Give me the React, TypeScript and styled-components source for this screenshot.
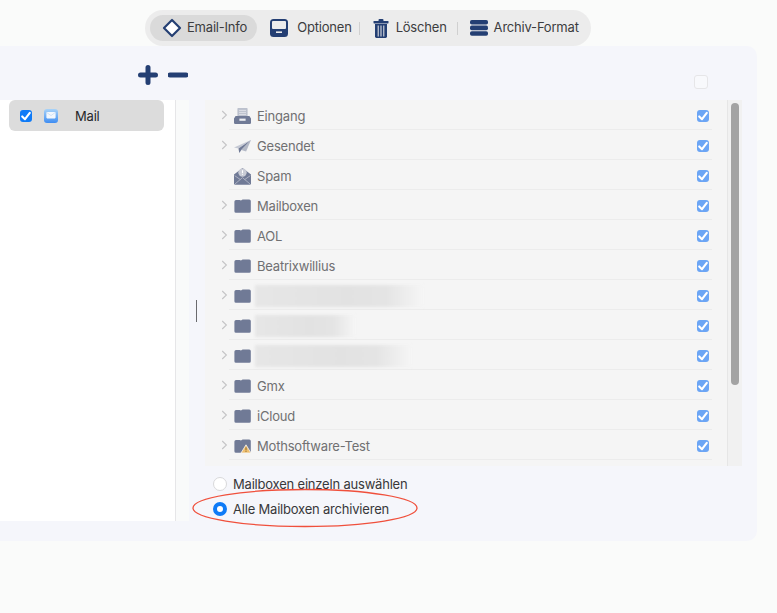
import React from 'react';
import styled, { createGlobalStyle } from 'styled-components';

const GlobalStyle = createGlobalStyle`
  html, body {
    margin: 0;
    padding: 0;
    background: #fafbfa;
    font-family: Inter, "Liberation Sans", sans-serif;
    overflow: hidden;
  }
`;

const NAVY = '#243f73';
const FOLDER = '#707a96';

const DiamondIcon = () => (
  <svg width="20" height="20" viewBox="0 0 20 20">
    <path d="M10 2 18 10 10 18 2 10Z" fill="#fff" stroke={NAVY} strokeWidth="2.2" strokeLinejoin="round" />
  </svg>
);

const OptionsIcon = () => (
  <svg width="18" height="18" viewBox="0 0 18 18">
    <rect width="18" height="18" rx="3.5" fill={NAVY} />
    <rect x="2" y="2" width="14" height="8" rx="1" fill="#ececec" />
    <rect x="6" y="12.4" width="6" height="1.6" fill="#ececec" />
  </svg>
);

const TrashIcon = () => (
  <svg width="16" height="19" viewBox="0 0 16 19">
    <rect x="5.5" y="0" width="5" height="2.5" rx="1" fill={NAVY} />
    <rect x="0.5" y="2" width="15" height="2.4" rx="0.6" fill={NAVY} />
    <path d="M2 5h12v12.6a1.4 1.4 0 0 1-1.4 1.4H3.4A1.4 1.4 0 0 1 2 17.6Z" fill={NAVY} />
    <path d="M5.2 6.5v11M8 6.5v11M10.8 6.5v11" stroke="#ececec" strokeWidth="1" />
  </svg>
);

const StackIcon = () => (
  <svg width="18" height="16" viewBox="0 0 18 16">
    <rect width="18" height="4.6" rx="1.8" fill={NAVY} />
    <rect y="5.6" width="18" height="4.6" rx="1.8" fill={NAVY} />
    <rect y="11.2" width="18" height="4.6" rx="1.8" fill={NAVY} />
  </svg>
);

const PlusIcon = () => (
  <svg width="20" height="20" viewBox="0 0 20 20">
    <path d="M10 2.5v15M2.5 10h15" stroke={NAVY} strokeWidth="5" strokeLinecap="round" />
  </svg>
);

const MinusIcon = () => (
  <svg width="20" height="20" viewBox="0 0 20 20">
    <path d="M2 10h16" stroke={NAVY} strokeWidth="5" strokeLinecap="round" />
  </svg>
);

const CheckMark = () => (
  <svg width="12" height="12" viewBox="0 0 12 12">
    <path d="M2.2 6.4 5 9.2 9.8 2.8" fill="none" stroke="#fff" strokeWidth="2.1" strokeLinecap="round" strokeLinejoin="round" />
  </svg>
);

const Chevron = () => (
  <svg width="7" height="10" viewBox="0 0 7 10" style={{ display: 'block' }}>
    <path d="M1.2 1 5.4 5 1.2 9" fill="none" stroke="#c4c4c6" strokeWidth="1.1" />
  </svg>
);

const FolderIcon = ({ warn }: { warn?: boolean }) => (
  <svg width="17" height="14" viewBox="0 0 17 14">
    <path
      d="M0.4 2.4A1.6 1.6 0 0 1 2 .9h3.6L7 1.6 8.6 .5h6.6A1.6 1.6 0 0 1 16.8 2.1v10.1a1.6 1.6 0 0 1-1.6 1.6H2A1.6 1.6 0 0 1 .4 12.2Z"
      fill={FOLDER}
    />
    {warn && (
      <>
        <path d="M12 5.8 17 14H7Z" fill="#f0c070" stroke="#f5f5f5" strokeWidth="0.8" />
        <path d="M12 8.4v3M12 12.2v.8" stroke="#7a5a20" strokeWidth="0.9" />
      </>
    )}
  </svg>
);

const InboxIcon = () => (
  <svg width="17" height="16" viewBox="0 0 17 16">
    <rect x="3.4" y="0" width="10.2" height="9" rx="0.8" fill="#bcc1cd" />
    <path d="M5 2.4h7M5 4.4h7M5 6.4h7" stroke="#e6e7ec" strokeWidth="0.8" />
    <path d="M1.6 8h13.8L17 10.5V14.6A1.3 1.3 0 0 1 15.7 16H1.3A1.3 1.3 0 0 1 0 14.6V10.5Z" fill={FOLDER} />
    <rect x="5.4" y="10.6" width="6.2" height="2.2" fill="#eceef2" />
  </svg>
);

const PlaneIcon = () => (
  <svg width="17" height="13" viewBox="0 0 16 13" preserveAspectRatio="none">
    <path d="M16 0 0 7.4 4.2 8.6Z" fill="#c5c9d4" />
    <path d="M16 0 4.2 8.6 5 13 6.9 9.9Z" fill={FOLDER} />
    <path d="M16 0 6.9 9.9 11.4 11.4Z" fill="#b4b9c6" />
  </svg>
);

const SpamIcon = () => (
  <svg width="17" height="17" viewBox="0 0 17 17">
    <path d="M0 6.5 8.5 0 17 6.5V15.4A1.4 1.4 0 0 1 15.6 16.8H1.4A1.4 1.4 0 0 1 0 15.4Z" fill={FOLDER} />
    <path d="M1 16 8.5 9.6 16 16M0.6 7.6 6.4 11.6M16.4 7.6 10.6 11.6" fill="none" stroke="#b9bdcb" strokeWidth="0.8" />
    <circle cx="8.5" cy="4.6" r="4.2" fill="#c9ccd6" />
    <path d="M8.5 2.2v3M8.5 6.2v.9" stroke="#fff" strokeWidth="1.1" />
  </svg>
);

const MailAppIcon = () => (
  <svg width="14" height="14" viewBox="0 0 14 14">
    <defs>
      <linearGradient id="mailApp" x1="0" y1="0" x2="0" y2="1">
        <stop offset="0" stopColor="#a9d3f8" />
        <stop offset="1" stopColor="#3f8df2" />
      </linearGradient>
    </defs>
    <rect width="14" height="14" rx="3" fill="url(#mailApp)" />
    <rect x="2.4" y="3" width="9.2" height="6.4" rx="0.8" fill="#f2f7fd" />
    <path d="M2.6 3.4 7 6.6 11.4 3.4" fill="none" stroke="#bcd4ee" strokeWidth="0.6" />
  </svg>
);

type Mailbox = {
  name?: string;
  icon: React.ReactNode;
  noChevron?: boolean;
  blurWidth?: number;
};

const folders: Mailbox[] = [
  { name: 'Eingang', icon: <InboxIcon /> },
  { name: 'Gesendet', icon: <PlaneIcon /> },
  { name: 'Spam', icon: <SpamIcon />, noChevron: true },
  { name: 'Mailboxen', icon: <FolderIcon /> },
  { name: 'AOL', icon: <FolderIcon /> },
  { name: 'Beatrixwillius', icon: <FolderIcon /> },
  { blurWidth: 168, icon: <FolderIcon /> },
  { blurWidth: 100, icon: <FolderIcon /> },
  { blurWidth: 156, icon: <FolderIcon /> },
  { name: 'Gmx', icon: <FolderIcon /> },
  { name: 'iCloud', icon: <FolderIcon /> },
  { name: 'Mothsoftware-Test', icon: <FolderIcon warn /> },
];

export default function App() {
  return (
    <Page>
      <GlobalStyle />
      <Toolbar>
        <ToolItem $active $gap={5} $left={12} $right={10}>
          <DiamondIcon />
          <ToolLabel>Email-Info</ToolLabel>
        </ToolItem>
        <ToolItem $gap={9} $left={13} $right={7}>
          <OptionsIcon />
          <ToolLabel>Optionen</ToolLabel>
        </ToolItem>
        <ToolDivider />
        <ToolItem $gap={7} $left={13} $right={10}>
          <TrashIcon />
          <ToolLabel>Löschen</ToolLabel>
        </ToolItem>
        <ToolDivider />
        <ToolItem $gap={6} $left={12} $right={0}>
          <StackIcon />
          <ToolLabel>Archiv-Format</ToolLabel>
        </ToolItem>
      </Toolbar>
      <Panel>
        <PanelHead>
          <AddRemove>
            <PlusIcon />
            <MinusIcon />
          </AddRemove>
          <EmptyBox />
        </PanelHead>
        <PanelBody>
          <Sidebar>
            <AccountRow>
              <AccountCheck>
                <CheckMark />
              </AccountCheck>
              <MailAppIcon />
              <AccountName>Mail</AccountName>
            </AccountRow>
          </Sidebar>
          <Splitter />
          <Main>
            <Caret />
            <ListBox>
              <Rows>
                {folders.map((f, i) => (
                  <Row key={i}>
                    <ChevronSlot>{!f.noChevron && <Chevron />}</ChevronSlot>
                    <RowInner>
                      <IconSlot>{f.icon}</IconSlot>
                      {f.name ? <RowName>{f.name}</RowName> : <BlurredName $width={f.blurWidth ?? 100} />}
                      <RowCheck>
                        <CheckMark />
                      </RowCheck>
                    </RowInner>
                  </Row>
                ))}
              </Rows>
              <ScrollTrack>
                <ScrollThumb />
              </ScrollTrack>
            </ListBox>
            <RadioGroup>
              <RadioRow>
                <Radio />
                Mailboxen einzeln auswählen
              </RadioRow>
              <RadioRow>
                <Radio $on />
                Alle Mailboxen archivieren
              </RadioRow>
              <Annotation width="226" height="40" viewBox="0 0 226 40">
                <ellipse cx="113" cy="20" rx="112" ry="18.5" fill="none" stroke="#f0503c" strokeWidth="1.3" />
              </Annotation>
            </RadioGroup>
          </Main>
        </PanelBody>
      </Panel>
    </Page>
  );
}

const Page = styled.div`
  width: 777px;
  height: 613px;
  padding-top: 10px;
  box-sizing: border-box;
  background: #fafbfa;
  overflow: hidden;
`;

const Toolbar = styled.div`
  width: 446px;
  height: 36px;
  margin-left: 145px;
  padding: 0 5px;
  box-sizing: border-box;
  display: flex;
  align-items: center;
  background: #ececec;
  border-radius: 18px;
`;

const ToolItem = styled.div<{ $active?: boolean; $gap: number; $left: number; $right: number }>`
  height: 26px;
  display: flex;
  align-items: center;
  gap: ${(p) => p.$gap}px;
  padding: 0 ${(p) => p.$right}px 0 ${(p) => p.$left}px;
  background: ${(p) => (p.$active ? '#dadada' : 'transparent')};
  border-radius: 13px;
  color: #3c3c3e;
  font-size: 13px;
  letter-spacing: -0.2px;
  white-space: nowrap;
`;

const ToolLabel = styled.span`
  padding-bottom: 2px;
`;

const ToolDivider = styled.div`
  width: 1px;
  height: 13px;
  background: #d0d0d0;
`;

const Panel = styled.div`
  width: 757px;
  height: 495px;
  background: #f5f6fb;
  border-radius: 0 10px 10px 0;
  display: flex;
  flex-direction: column;
`;

const PanelHead = styled.div`
  height: 54px;
  flex-shrink: 0;
  display: flex;
  align-items: flex-start;
  justify-content: space-between;
  padding: 19px 49px 0 138px;
  box-sizing: border-box;
`;

const AddRemove = styled.div`
  display: flex;
  gap: 10px;
`;

const EmptyBox = styled.div`
  width: 14px;
  height: 14px;
  margin-top: 10px;
  box-sizing: border-box;
  background: #f8f9fc;
  border: 1px solid #e6e6e8;
  border-radius: 3px;
`;

const PanelBody = styled.div`
  display: flex;
  height: 421px;
`;

const Sidebar = styled.div`
  width: 175px;
  background: #fff;
  padding: 0 11px 0 9px;
  box-sizing: border-box;
`;

const AccountRow = styled.div`
  height: 31px;
  display: flex;
  align-items: center;
  padding-left: 11px;
  background: #dcdcdc;
  border-radius: 6px;
  gap: 12px;
`;

const AccountCheck = styled.div`
  width: 12px;
  height: 12px;
  display: flex;
  align-items: center;
  justify-content: center;
  background: #0f7bf7;
  border-radius: 3px;
`;

const AccountName = styled.div`
  margin-left: 5px;
  color: #26262a;
  font-size: 13px;
  letter-spacing: -0.2px;
`;

const Splitter = styled.div`
  width: 14px;
  background: #f9fafa;
  border-left: 1px solid #e6e6e8;
  box-sizing: border-box;
`;

const Main = styled.div`
  position: relative;
  flex: 1;
  padding-left: 16px;
  padding-right: 15px;
  display: flex;
  flex-direction: column;
`;

const Caret = styled.div`
  position: absolute;
  left: 7px;
  top: 200px;
  width: 1px;
  height: 22px;
  background: #6a6a6e;
`;

const ListBox = styled.div`
  height: 366px;
  display: flex;
  background: #f5f5f5;
`;

const Rows = styled.div`
  flex: 1;
`;

const Row = styled.div`
  height: 30px;
  display: flex;
  align-items: stretch;
`;

const ChevronSlot = styled.div`
  width: 24px;
  padding: 10px 0 0 16px;
  box-sizing: border-box;
`;

const RowInner = styled.div`
  width: 483px;
  display: flex;
  align-items: center;
  padding-top: 3px;
  box-sizing: border-box;
  border-bottom: 1px solid #ececec;
`;

const IconSlot = styled.div`
  width: 26px;
  padding-left: 5px;
  box-sizing: border-box;
  display: flex;
  align-items: center;
`;

const RowName = styled.div`
  margin-left: 2px;
  color: #707072;
  font-size: 13px;
  letter-spacing: -0.2px;
`;

const BlurredName = styled.div<{ $width: number }>`
  width: ${(p) => p.$width}px;
  height: 22px;
  background: linear-gradient(90deg, #e6e6e6 0%, #e2e2e2 55%, #e4e4e4 78%, #f5f5f5 100%);
  filter: blur(1.5px);
`;

const RowCheck = styled.div`
  width: 12px;
  height: 12px;
  margin-left: auto;
  margin-right: 3px;
  display: flex;
  align-items: center;
  justify-content: center;
  background: #6ba5f5;
  border-radius: 3px;
`;

const ScrollTrack = styled.div`
  width: 15px;
  padding: 3px 3px 0;
  box-sizing: border-box;
  background: #f1f1f1;
  border-left: 1px solid #e6e6e6;
`;

const ScrollThumb = styled.div`
  width: 8px;
  height: 282px;
  background: #a3a3a3;
  border-radius: 4px;
`;

const RadioGroup = styled.div`
  position: relative;
  display: flex;
  flex-direction: column;
  padding: 5px 0 0 8px;
`;

const RadioRow = styled.div`
  height: 25px;
  display: flex;
  align-items: center;
  gap: 6px;
  color: #38383a;
  font-size: 13px;
  letter-spacing: -0.2px;
`;

const Radio = styled.div<{ $on?: boolean }>`
  width: 14px;
  height: 14px;
  box-sizing: border-box;
  border-radius: 50%;
  background: #fff;
  border: ${(p) => (p.$on ? '4px solid #0f7bf7' : '1px solid #d8d8da')};
`;

const Annotation = styled.svg`
  position: absolute;
  left: -13px;
  top: 22px;
  overflow: visible;
`;
